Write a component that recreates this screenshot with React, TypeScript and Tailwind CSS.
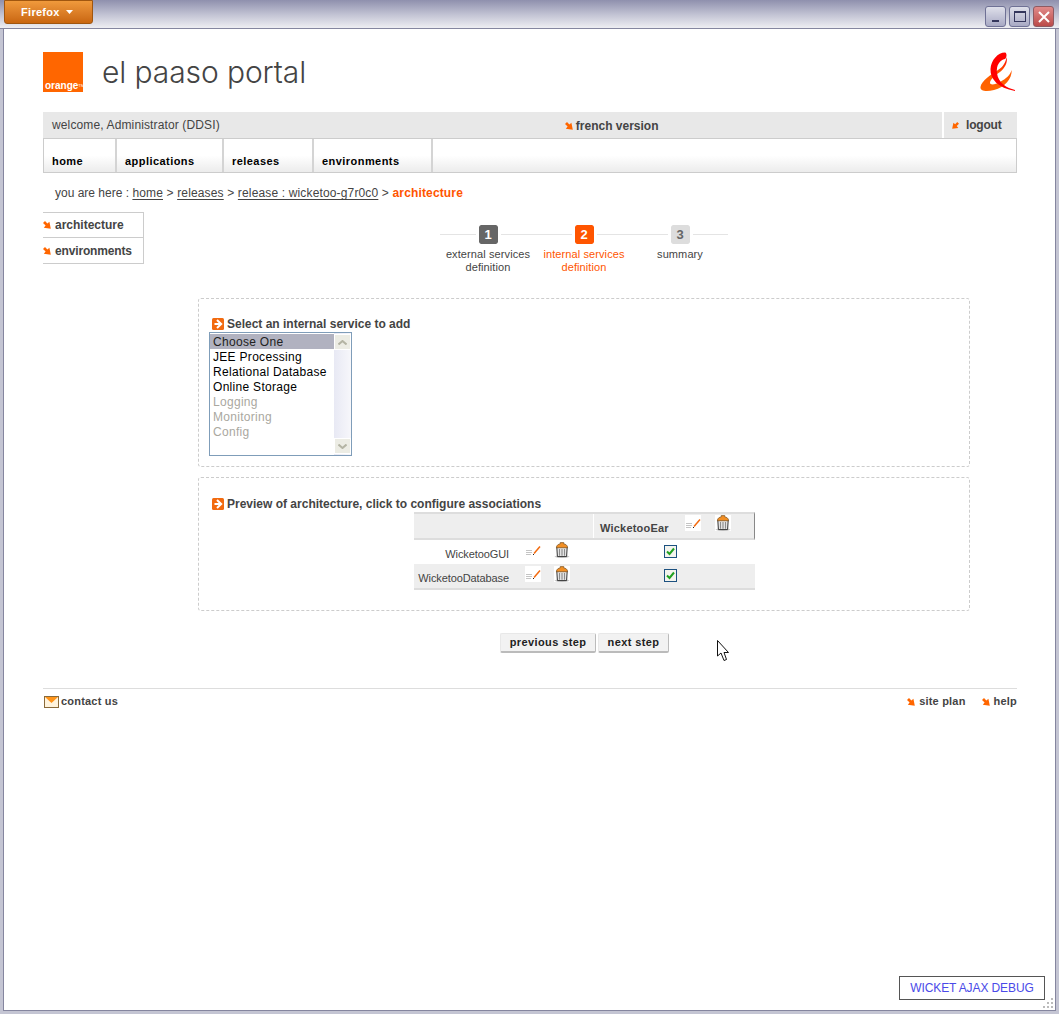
import type { ReactNode } from 'react';

const sans = "font-['Liberation_Sans',Arial,sans-serif]";

function ArrowDown({ className = '' }: { className?: string }) {
  return (
    <svg width="8" height="8" viewBox="0 0 8 8" className={`shrink-0 ${className}`}>
      <path d="M0 2 L2 0 L4.4 2.6 L6.4 0.8 L7.8 7.8 L0.8 6.8 L2.6 4.6 Z" fill="#ff6600" />
    </svg>
  );
}

function ArrowLogout() {
  return (
    <svg width="7" height="7" viewBox="0 0 8 8" className="shrink-0">
      <path d="M8 2 L6 0 L3.6 2.6 L1.6 0.8 L0.2 7.8 L7.2 6.8 L5.4 4.6 Z" fill="#ff6600" />
    </svg>
  );
}

function BoxArrow() {
  return (
    <svg width="12" height="12" viewBox="0 0 12 12" className="shrink-0">
      <rect width="12" height="12" rx="1.5" fill="#f26a0f" />
      <path d="M5 2 L9.2 6 L5 10 M2.5 6 H8.5" stroke="#fff" strokeWidth="2" fill="none" />
    </svg>
  );
}

function EditIcon() {
  return (
    <svg width="16" height="16" viewBox="0 0 16 16" className="shrink-0 bg-white">
      <path d="M1 8.5H7M1 10.5H7M1 12.5H6" stroke="#c4c4c4" strokeWidth="1" />
      <path d="M9 11.5 L15 4.5" stroke="#f26a0f" strokeWidth="1.5" />
      <path d="M8 13 L9 12" stroke="#222" strokeWidth="1" />
    </svg>
  );
}

function TrashIcon() {
  return (
    <svg width="16" height="16" viewBox="0 0 16 16" className="shrink-0 bg-white">
      <ellipse cx="8" cy="14.6" rx="7.5" ry="1.3" fill="#c8c8c8" />
      <path d="M2.8 5 H13.2 L12.6 14.6 H3.4 Z" fill="#ececec" stroke="#333" strokeWidth="1" />
      <path d="M5.5 7V13.8M8 7V13.8M10.5 7V13.8" stroke="#8c8c8c" strokeWidth="1.2" />
      <path d="M2.4 5.8 C2.4 2.8 5 2 6.2 2 V0.6 H9.8 V2 C11 2 13.6 2.8 13.6 5.8 Z" fill="#f28f24" stroke="#7a5526" strokeWidth="0.7" />
    </svg>
  );
}

function Check() {
  return (
    <div className="w-[13px] h-[13px] border border-[#1c5180] bg-[#f4f4ee] flex items-center justify-center">
      <svg width="9" height="9" viewBox="0 0 9 9">
        <path d="M1 4.5 L3.5 7 L8 1.5" stroke="#21a121" strokeWidth="2" fill="none" />
      </svg>
    </div>
  );
}

function WinButton({ className, children }: { className: string; children: ReactNode }) {
  return (
    <div className={`w-[21px] h-[21px] rounded-[3px] border border-[#6f7195] flex items-center justify-center ${className}`}>
      {children}
    </div>
  );
}

function Step({ n, box, text, children }: { n: string; box: string; text: string; children: ReactNode }) {
  return (
    <div className="w-[96px] flex flex-col items-center">
      <div className="w-full h-[19px] relative flex justify-center items-center">
        <div className="absolute left-0 right-0 top-[9px] h-px bg-[#e4e4e4]" />
        <div className={`relative z-10 w-[19px] h-[19px] rounded-[2px] outline-[3px] outline-white flex items-center justify-center text-[13px] font-bold ${box}`}>{n}</div>
      </div>
      <div className={`mt-[4px] text-[11px] leading-[13px] text-center tracking-[0.1px] ${text}`}>{children}</div>
    </div>
  );
}

const options = [
  { label: 'Choose One', cls: 'bg-[#b1b2c0] text-[#222]' },
  { label: 'JEE Processing', cls: 'text-black' },
  { label: 'Relational Database', cls: 'text-black' },
  { label: 'Online Storage', cls: 'text-black' },
  { label: 'Logging', cls: 'text-[#aaa89f]' },
  { label: 'Monitoring', cls: 'text-[#aaa89f]' },
  { label: 'Config', cls: 'text-[#aaa89f]' },
];

export default function App() {
  return (
    <div className={`relative w-[1059px] h-[1014px] overflow-hidden flex flex-col bg-[#c4c5d3] ${sans}`}>
      {/* window title bar */}
      <div className="h-[29px] shrink-0 flex items-start bg-gradient-to-b from-[#8f90ad] via-[#c0c1d2] to-[#eeeef2] border-b border-[#85869f]">
        <div className="ml-[4px] w-[89px] h-[24px] rounded-b-[3px] border border-[#a0560f] bg-gradient-to-b from-[#f09a3c] to-[#c9660f] flex items-center pl-[16px] gap-[6px] text-white text-[11px] font-bold tracking-[0.3px]">
          Firefox
          <svg width="7" height="4" viewBox="0 0 7 4"><path d="M0 0H7L3.5 4Z" fill="#fff" /></svg>
        </div>
        <div className="ml-auto mr-[5px] mt-[6px] flex gap-[3px]">
          <WinButton className="bg-gradient-to-b from-[#dfe0ea] to-[#a8a9c4]">
            <div className="w-[7px] h-[2px] bg-[#34365c] mt-[9px]" />
          </WinButton>
          <WinButton className="bg-gradient-to-b from-[#dfe0ea] to-[#a8a9c4]">
            <div className="w-[12px] h-[11px] border border-[#34365c] border-t-2" />
          </WinButton>
          <WinButton className="bg-gradient-to-b from-[#e08a8a] to-[#bb4a4a] border-[#8e5a62]">
            <svg width="12" height="12" viewBox="0 0 12 12"><path d="M1 1L11 11M11 1L1 11" stroke="#fff" strokeWidth="2" /></svg>
          </WinButton>
        </div>
      </div>

      {/* page */}
      <div className="flex-1 mx-[3px] mb-[3px] bg-white border-x border-b border-[#85869f] text-[#444] text-[12px] flex flex-col">
        <div className="ml-[39px] w-[974px] flex flex-col">
          <div className="mt-[23px] h-[40px] flex items-start">
            <div className="w-[40px] h-[40px] bg-[#ff6600] flex flex-col justify-end pl-[2px] pb-[1px]">
              <span className="text-white text-[10px] font-bold leading-[11px]">orange<span className="align-top text-[4px] font-normal">TM</span></span>
            </div>
            <div className="ml-[19px] font-['Inter',sans-serif] font-light text-[30px] leading-[40px] tracking-[-0.1px] text-[#444]">el paaso portal</div>
            <svg width="37" height="41" viewBox="0 0 37 41" className="ml-auto">
              <defs>
                <linearGradient id="amp" x1="0" y1="0" x2="0" y2="1">
                  <stop offset="0" stopColor="#ff0000" />
                  <stop offset="0.45" stopColor="#ff5a00" />
                  <stop offset="1" stopColor="#ff6600" />
                </linearGradient>
              </defs>
              <path d="M31.7 18 C32 27 25 35 14 38 C6 40 0 39 0.5 35 C1 29 12 22 18 18 C23 15 26 10 26.5 5 C28 10 25 16 20 20 C14 24 10 28 10 31 C10 33 15 33 20 30 C27 26 30 23 31.7 18 Z" fill="url(#amp)" />
              <path d="M25 0.5 C18 0.5 11 8 10.5 17 C10 27 18 36 35 39 L35 38 C27 36 18 31 17 21 C16 13 20 8 25 7 C27 5 27 1 25 0.5 Z" fill="#ff0000" />
            </svg>
          </div>

          {/* user bar */}
          <div className="mt-[20px] h-[26px] bg-[#e8e8e8] flex items-center">
            <span className="ml-[9px] tracking-[0.13px]">welcome, Administrator (DDSI)</span>
            <div className="ml-[345px] flex items-center gap-[3px] font-bold mt-[2px]">
              <ArrowDown />
              <span>french version</span>
            </div>
            <div className="ml-auto w-[75px] h-full border-l-2 border-white flex items-center pl-[8px] gap-[7px] font-bold">
              <ArrowLogout />
              <span className="tracking-[-0.2px]">logout</span>
            </div>
          </div>

          {/* main nav */}
          <nav className="h-[35px] border border-[#ccc] bg-gradient-to-b from-white from-50% to-[#ececec] flex items-stretch text-[11px] font-bold text-black tracking-[0.45px]">
            <div className="w-[73px] border-r-2 border-[#d4d4d4] pl-[8px] pt-[14px]">home</div>
            <div className="w-[107px] border-r-2 border-[#d4d4d4] pl-[8px] pt-[14px]">applications</div>
            <div className="w-[90px] border-r-2 border-[#d4d4d4] pl-[8px] pt-[14px]">releases</div>
            <div className="w-[119px] border-r-2 border-[#d4d4d4] pl-[8px] pt-[14px]">environments</div>
          </nav>

          <div className="mt-[13px] pl-[12px] h-[14px] leading-[14px] tracking-[0.15px] whitespace-pre">
            <span className="tracking-normal">you are here : </span><span className="underline underline-offset-2">home</span> &gt; <span className="underline underline-offset-2">releases</span> &gt; <span className="underline underline-offset-2">release : wicketoo-g7r0c0</span> &gt; <span className="font-bold text-[#ff5500]">architecture</span>
          </div>

          {/* side menu and wizard */}
          <div className="mt-[12px] flex items-start">
            <div className="w-[101px] border-y border-r border-[#ccc] font-bold">
              <div className="h-[25px] border-b border-[#ccc] flex items-center gap-[4px]"><ArrowDown /><span>architecture</span></div>
              <div className="h-[25px] flex items-center gap-[4px]"><ArrowDown /><span className="tracking-[-0.15px]">environments</span></div>
            </div>
            <div className="mt-[13px] ml-[296px] flex">
              <Step n="1" box="bg-[#666] text-white" text="text-[#444]">external services<br />definition</Step>
              <Step n="2" box="bg-[#ff5500] text-white" text="text-[#ff5500]">internal services<br />definition</Step>
              <Step n="3" box="bg-[#ddd] text-[#666]" text="text-[#444]">summary</Step>
            </div>
          </div>

          {/* service picker */}
          <section className="mt-[24px] ml-[155px] w-[772px] h-[169px] border border-dashed border-[#ccc] rounded-[3px] pl-[10px] pt-[18px]">
            <div className="flex items-center gap-[3px] pl-[3px] h-[13px] font-bold"><BoxArrow /><span>Select an internal service to add</span></div>
            <div className="mt-[2px] w-[143px] h-[124px] border border-[#7f9db9] flex bg-white">
              <div className="flex-1 pt-[1px] text-[12px] tracking-[0.3px]">
                {options.map((o) => (
                  <div key={o.label} className={`h-[15px] leading-[16px] pl-[3px] ${o.cls}`}>{o.label}</div>
                ))}
              </div>
              <div className="w-[17px] bg-gradient-to-r from-[#e8e9f4] to-[#f7f7fb] flex flex-col justify-between py-px">
                <div className="h-[16px] bg-[#ecece4] border border-white flex items-center justify-center">
                  <svg width="9" height="5" viewBox="0 0 9 5"><path d="M0.5 4.5L4.5 1L8.5 4.5" stroke="#b4b4a4" strokeWidth="2" fill="none" /></svg>
                </div>
                <div className="h-[16px] bg-[#ecece4] border border-white flex items-center justify-center">
                  <svg width="9" height="5" viewBox="0 0 9 5"><path d="M0.5 0.5L4.5 4L8.5 0.5" stroke="#b4b4a4" strokeWidth="2" fill="none" /></svg>
                </div>
              </div>
            </div>
          </section>

          {/* architecture preview */}
          <section className="mt-[10px] ml-[155px] w-[772px] h-[134px] border border-dashed border-[#ccc] rounded-[3px] pt-[19px] pl-[13px]">
            <div className="flex items-center gap-[3px] h-[13px] font-bold"><BoxArrow /><span>Preview of architecture, click to configure associations</span></div>
            <div className="mt-[2px] ml-[202px] w-[341px] text-[11px]">
              <div className="h-[28px] bg-[#eee] border-t-2 border-b-2 border-[#ddd] flex border-r border-r-[#888]">
                <div className="w-[180px] border-r border-white" />
                <div className="flex-1 flex items-start pl-[6px] font-bold">
                  <span className="w-[85px] mt-[6px] tracking-[0.2px]">WicketooEar</span>
                  <div className="mt-[1px]"><EditIcon /></div>
                  <div className="ml-[14px] mt-[1px]"><TrashIcon /></div>
                </div>
              </div>
              <div className="h-[24px] flex items-start">
                <div className="w-[95px] text-right mt-[8px] leading-[13px] tracking-[-0.1px]">WicketooGUI</div>
                <div className="ml-[16px] mt-[2px]"><EditIcon /></div>
                <div className="ml-[13px] mt-[2px]"><TrashIcon /></div>
                <div className="ml-[94px] mt-[5px]"><Check /></div>
              </div>
              <div className="h-[26px] bg-[#eee] border-b-2 border-[#ddd] flex items-start">
                <div className="w-[95px] text-right mt-[8px] leading-[13px] tracking-[-0.1px]">WicketooDatabase</div>
                <div className="ml-[16px] mt-[2px]"><EditIcon /></div>
                <div className="ml-[13px] mt-[2px]"><TrashIcon /></div>
                <div className="ml-[94px] mt-[5px]"><Check /></div>
              </div>
            </div>
          </section>

          {/* wizard buttons */}
          <div className="mt-[22px] ml-[457px] flex gap-[2px] text-[11px] font-bold text-[#222] tracking-[0.4px]">
            <button className="w-[96px] h-[20px] rounded-[2px] bg-[#f2f2f2] border border-[#e8e8e8] border-r-[#bbb] border-b-2 border-b-[#bbb]">previous step</button>
            <button className="w-[71px] h-[20px] rounded-[2px] bg-[#f2f2f2] border border-[#e8e8e8] border-r-[#bbb] border-b-2 border-b-[#bbb]">next step</button>
          </div>

          {/* footer */}
          <footer className="mt-[35px] border-t border-[#ddd] pt-[6px] h-[30px] flex items-start text-[11px] leading-[13px] font-bold tracking-[0.2px]">
            <svg width="15" height="12" viewBox="0 0 15 12" className="ml-px mt-[1px] shrink-0">
              <rect x="0.5" y="0.5" width="14" height="11" fill="#fff3dc" stroke="#8a6a3a" />
              <path d="M1 1H14L7.5 7Z" fill="#ff9419" />
            </svg>
            <span className="ml-[2px]">contact us</span>
            <div className="ml-auto flex items-center gap-[4px]"><ArrowDown /><span>site plan</span></div>
            <div className="ml-[16px] flex items-center gap-[4px]"><ArrowDown /><span>help</span></div>
          </footer>
        </div>
      </div>

      {/* debug link floats over the page */}
      <div className="absolute left-[899px] top-[976px] w-[146px] h-[24px] border border-[#555] bg-white flex items-center justify-center text-[12px] tracking-[-0.1px] text-[#4a4ae8]">WICKET AJAX DEBUG</div>

      {/* mouse pointer */}
      <svg width="14" height="22" viewBox="0 0 14 22" className="absolute left-[717px] top-[640px]">
        <path d="M0.5 0.5V16L4 13L7 20.5L9.5 19.5L7 12.5H11.5Z" fill="#fff" stroke="#111" strokeWidth="1" />
      </svg>

      {/* resize grip */}
      <div className="absolute left-[1043px] top-[998px] grid grid-cols-3 gap-[2px]">
        <span /><span /><span className="w-[2px] h-[2px] bg-[#bbb]" />
        <span /><span className="w-[2px] h-[2px] bg-[#bbb]" /><span className="w-[2px] h-[2px] bg-[#bbb]" />
        <span className="w-[2px] h-[2px] bg-[#bbb]" /><span className="w-[2px] h-[2px] bg-[#bbb]" /><span className="w-[2px] h-[2px] bg-[#bbb]" />
      </div>
    </div>
  );
}
